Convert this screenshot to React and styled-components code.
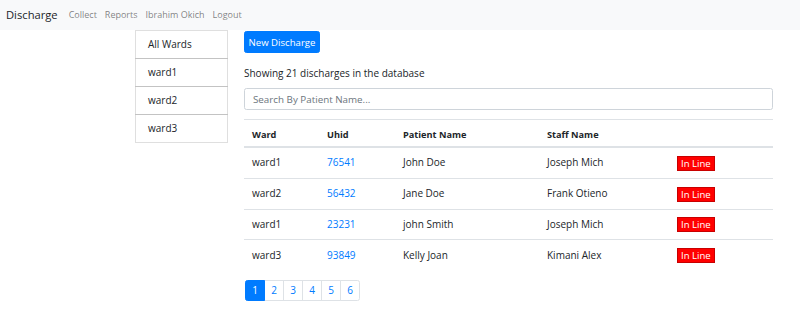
import React from "react";
import styled, { createGlobalStyle } from "styled-components";

const Global = createGlobalStyle`
  * { box-sizing: border-box; }
  body {
    margin: 0;
    font-family: "Open Sans", "Noto Sans", sans-serif;
    font-size: 10px;
    line-height: 1.5;
    color: #212529;
    background: #fff;
  }
`;

const Navbar = styled.nav`
  height: 30px;
  background: #f8f9fa;
  display: flex;
  align-items: center;
  padding: 0 6px;
`;

const Brand = styled.span`
  font-size: 11.2px;
  color: #212529;
  margin-right: 7px;
`;

const NavLink = styled.a`
  color: rgba(0, 0, 0, 0.5);
  padding: 0 4px;
  font-size: 9px;
  text-decoration: none;
  white-space: nowrap;
`;

const Body = styled.div`
  display: flex;
  padding-left: 135px;
  gap: 16px;
`;

const Sidebar = styled.ul`
  list-style: none;
  margin: 0;
  padding: 0;
  width: 93px;
  align-self: flex-start;
`;

const SideItem = styled.li`
  border: 1px solid rgba(0, 0, 0, 0.125);
  margin-top: ${(p) => (p.$first ? "0" : "-1px")};
  padding: 6px 12px;
  line-height: 15px;
  height: 29px;
  color: #212529;
`;

const Main = styled.main`
  width: 529px;
  padding-top: 1px;
`;

const Button = styled.button`
  font-family: inherit;
  font-size: 9.6px;
  line-height: 15px;
  color: #fff;
  background: #007bff;
  border: 1px solid #007bff;
  border-radius: 2.5px;
  padding: 3px 0;
  height: 22px;
  width: 76px;
  white-space: nowrap;
  display: block;
`;

const Info = styled.p`
  margin: 13px 0 0;
  line-height: 15px;
`;

const Search = styled.input`
  display: block;
  width: 100%;
  height: 22px;
  margin-top: 7px;
  font-family: inherit;
  font-size: 9.8px;
  padding: 3px 8px;
  border: 1px solid #ced4da;
  border-radius: 2.5px;
  color: #495057;
  &::placeholder { color: #6c757d; }
`;

const Table = styled.table`
  width: 100%;
  margin-top: 9px;
  border-collapse: collapse;
  table-layout: fixed;
`;

const Th = styled.th`
  text-align: left;
  font-weight: 700;
  font-size: 9.2px;
  padding: 7px 8px 4px;
  line-height: 15px;
  border-top: 1px solid #dee2e6;
  border-bottom: 2px solid #dee2e6;
`;

const Td = styled.td`
  padding: 7px 8px;
  line-height: 15px;
  border-top: 1px solid #dee2e6;
  vertical-align: middle;
  white-space: nowrap;
`;

const Link = styled.a`
  color: #007bff;
  text-decoration: none;
`;

const Badge = styled.span`
  display: inline-block;
  background: #ff0000;
  color: #fff;
  border: 1px solid #c80000;
  padding: 0 3px;
  font-size: 9.6px;
  line-height: 13px;
  height: 15px;
  white-space: nowrap;
  text-align: center;
  vertical-align: middle;
`;

const Pager = styled.ul`
  display: flex;
  list-style: none;
  padding: 0;
  margin: 10px 0 0 1px;
`;

const Page = styled.li`
  width: 20px;
  height: 21px;
  margin-left: ${(p) => (p.$first ? "0" : "-1px")};
  border: 1px solid ${(p) => (p.$active ? "#007bff" : "#dee2e6")};
  background: ${(p) => (p.$active ? "#007bff" : "#fff")};
  color: ${(p) => (p.$active ? "#fff" : "#007bff")};
  border-radius: ${(p) => (p.$first ? "2.5px 0 0 2.5px" : p.$last ? "0 2.5px 2.5px 0" : "0")};
  display: flex;
  align-items: center;
  justify-content: center;
  position: relative;
  z-index: ${(p) => (p.$active ? 1 : 0)};
`;

const rows = [
  ["ward1", "76541", "John Doe", "Joseph Mich"],
  ["ward2", "56432", "Jane Doe", "Frank Otieno"],
  ["ward1", "23231", "john Smith", "Joseph Mich"],
  ["ward3", "93849", "Kelly Joan", "Kimani Alex"],
];

export default function App() {
  return (
    <>
      <Global />
      <Navbar>
        <Brand>Discharge</Brand>
        <NavLink>Collect</NavLink>
        <NavLink>Reports</NavLink>
        <NavLink>Ibrahim Okich</NavLink>
        <NavLink>Logout</NavLink>
      </Navbar>
      <Body>
        <Sidebar>
          {["All Wards", "ward1", "ward2", "ward3"].map((w, i) => (
            <SideItem key={w} $first={i === 0}>{w}</SideItem>
          ))}
        </Sidebar>
        <Main>
          <Button>New Discharge</Button>
          <Info>Showing 21 discharges in the database</Info>
          <Search placeholder="Search By Patient Name..." />
          <Table>
            <colgroup>
              <col style={{ width: 75 }} />
              <col style={{ width: 76 }} />
              <col style={{ width: 144 }} />
              <col style={{ width: 130 }} />
              <col />
            </colgroup>
            <thead>
              <tr>
                <Th>Ward</Th>
                <Th>Uhid</Th>
                <Th>Patient Name</Th>
                <Th>Staff Name</Th>
                <Th></Th>
              </tr>
            </thead>
            <tbody>
              {rows.map((r) => (
                <tr key={r[1]}>
                  <Td>{r[0]}</Td>
                  <Td><Link>{r[1]}</Link></Td>
                  <Td>{r[2]}</Td>
                  <Td>{r[3]}</Td>
                  <Td><Badge>In Line</Badge></Td>
                </tr>
              ))}
            </tbody>
          </Table>
          <Pager>
            {[1, 2, 3, 4, 5, 6].map((n) => (
              <Page key={n} $active={n === 1} $first={n === 1} $last={n === 6}>{n}</Page>
            ))}
          </Pager>
        </Main>
      </Body>
    </>
  );
}
